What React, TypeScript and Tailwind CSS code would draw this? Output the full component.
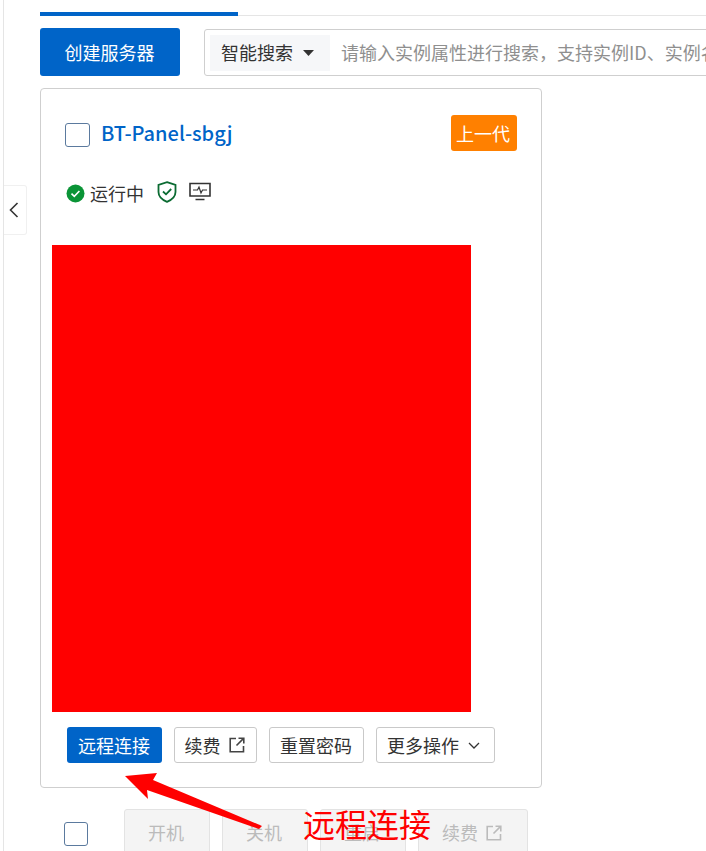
import React from "react";

const font = { fontFamily: '"Noto Sans CJK SC", "Noto Sans", sans-serif' };

function Check({ className }: { className: string }) {
  return <div className={"rounded-[3px] border border-[#5b7a9e] bg-white shrink-0 " + className} />;
}

function ExternalIcon({ color }: { color: string }) {
  return (
    <svg width="16" height="16" viewBox="0 0 16 16" fill="none" stroke={color} strokeWidth="1.6">
      <path d="M7 1.5H1.2v13.3h13.3V9" />
      <path d="M9.5 1.2h5.3v5.3M14.6 1.4 7.5 8.5" />
    </svg>
  );
}

function OutlineBtn({ children, className }: { children: React.ReactNode; className: string }) {
  return (
    <div className={"h-9 flex items-center justify-center rounded-[3px] border border-[#c9c9c9] bg-white text-[18px] text-[#333] " + className}>
      {children}
    </div>
  );
}

function DisabledBtn({ children, className }: { children: React.ReactNode; className: string }) {
  return (
    <div className={"h-[52px] flex items-start pt-[9px] justify-center rounded-[3px] border border-[#e3e3e3] bg-[#f4f4f4] text-[18px] text-[#bbbbbb] " + className}>
      {children}
    </div>
  );
}

export default function App() {
  return (
    <div style={font} className="relative w-[706px] h-[851px] overflow-hidden bg-white">
      <div className="ml-[3px] h-full border-l border-[#e5e5e5] pl-[36px]">
        <div className="pt-3 w-[666px]">
          <div className="h-1 flex">
            <div className="w-[198px] h-1 bg-[#0064c8]" />
            <div className="flex-1 mt-[3px] h-px bg-[#e5e5e5]" />
          </div>
        </div>

        <div className="mt-3 flex w-[700px]">
          <div className="w-[140px] h-12 shrink-0 rounded-[3px] bg-[#0064c8] text-white text-[18px] flex items-center justify-center pr-[1px]">
            创建服务器
          </div>
          <div className="ml-6 mt-px h-[47px] w-[520px] shrink-0 rounded-[3px] border border-[#cfcfcf] flex items-center pl-[5px] overflow-hidden whitespace-nowrap">
            <div className="w-[120px] h-9 shrink-0 bg-[#f6f7f9] flex items-center pl-[11px] text-[18px] text-[#333]">
              智能搜索
              <svg width="11" height="6" viewBox="0 0 11 6" className="ml-[10px]">
                <path d="M0 0h11L5.5 6z" fill="#333" />
              </svg>
            </div>
            <div className="ml-[11px] text-[18px] text-[#8f8f8f]">请输入实例属性进行搜索，支持实例ID、实例名称</div>
          </div>
        </div>

        <div className="mt-3 w-[502px] h-[700px] rounded-[4px] border border-[#cfcfcf] bg-white">
          <div className="pt-[26px] pl-6 pr-6 flex items-start justify-between">
            <div className="flex items-center mt-2 h-6">
              <Check className="w-[25px] h-[24px]" />
              <span className="ml-[11px] -mt-1 text-[20px] font-medium text-[#0064c8]">BT-Panel-sbgj</span>
            </div>
            <div className="w-[66px] h-9 rounded-[3px] bg-[#ff8000] text-white text-[18px] flex items-center justify-center pr-[2px]">上一代</div>
          </div>

          <div className="mt-[30px] pl-[25px] h-6 flex items-center text-[#333]">
            <svg width="19" height="19" viewBox="0 0 19 19">
              <circle cx="9.5" cy="9.5" r="9" fill="#0a9436" />
              <path d="M5.5 9.7 8.3 12.4 13.4 7" fill="none" stroke="#fff" strokeWidth="1.6" />
            </svg>
            <span className="ml-[5px] text-[18px]">运行中</span>
            <svg width="20" height="22" viewBox="0 0 20 22" fill="none" className="ml-[13px] -mt-[3px]">
              <path d="M10 1.2 18.5 4v7c0 4.8-3.6 7.8-8.5 9.800C5.100 18.800 1.500 15.800 1.500 11V4z" stroke="#0b6b32" strokeWidth="1.800" />
              <path d="M6 10.500 9 13.300 14.200 8" stroke="#0b6b32" strokeWidth="1.800" />
            </svg>
            <svg width="22" height="20" viewBox="0 0 22 20" fill="none" className="ml-[12px] -mt-[2px]" stroke="#333">
              <path d="M1 1.500h20v12.500H1z" strokeWidth="1.600" />
              <path d="M4 8h4.500l1.500-3 2 6 1.500-3H18" strokeWidth="1.200" />
              <path d="M6.500 17.500h9" strokeWidth="1.500" />
            </svg>
          </div>

          <div className="mt-[40px] ml-[11px] w-[419px] h-[467px] bg-[#ff0000]" />

          <div className="mt-[15px] ml-[26px] flex gap-3">
            <div className="w-[95px] h-9 rounded-[3px] bg-[#0064c8] text-white text-[18px] flex items-center justify-center pr-[1px]">远程连接</div>
            <OutlineBtn className="w-[83px] gap-[8px] pr-[2px]">
              续费
              <ExternalIcon color="#444" />
            </OutlineBtn>
            <OutlineBtn className="w-[95px] pr-[1px]">重置密码</OutlineBtn>
            <OutlineBtn className="w-[119px] gap-[9px] pr-[4px]">
              更多操作
              <svg width="12" height="7" viewBox="0 0 12 7" fill="none" stroke="#333" strokeWidth="1.300">
                <path d="M1 1 6 6l5-5" />
              </svg>
            </OutlineBtn>
          </div>
        </div>

        <div className="mt-[21px] flex">
          <Check className="ml-6 mt-[13px] w-[24px] h-[24px]" />
          <div className="ml-9 flex gap-3">
            <DisabledBtn className="w-[86px] pr-[2px]">开机</DisabledBtn>
            <DisabledBtn className="w-[86px] pr-[2px]">关机</DisabledBtn>
            <DisabledBtn className="w-[86px] pr-[2px]">重启</DisabledBtn>
            <DisabledBtn className="w-[110px] gap-[8px] pr-[2px]">
              续费
              <span className="mt-[6px]"><ExternalIcon color="#bbbbbb" /></span>
            </DisabledBtn>
          </div>
        </div>
      </div>

      <div className="absolute left-[4px] top-[185px] w-[23px] h-[50px] rounded-r-[3px] border border-l-0 border-[#f0f0f0] bg-white flex items-center justify-center pr-[2px]">
        <svg width="10" height="16" viewBox="0 0 10 16" fill="none" stroke="#333" strokeWidth="1.600">
          <path d="M8.500 1 1.500 8l7 7" />
        </svg>
      </div>

      <svg width="706" height="851" viewBox="0 0 706 851" className="absolute left-0 top-0">
        <path d="M125 776 157 773 153 780 262 826 259 829 147 790 148 799Z" fill="#ff0000" />
      </svg>
      <div className="absolute left-[303px] top-[800px] text-[32px] leading-[46px] text-[#ff0000] whitespace-nowrap">远程连接</div>
    </div>
  );
}
